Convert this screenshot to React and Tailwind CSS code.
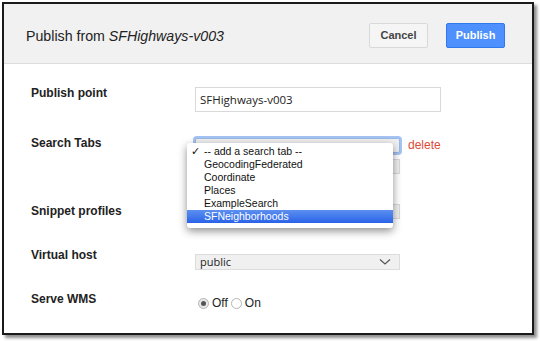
import React from "react";

const ctrl = { fontFamily: '"Open Sans", "DejaVu Sans", sans-serif' };
const menu = { fontFamily: '"Liberation Sans", Arial, sans-serif' };

function Arrow() {
  return (
    <svg width="12" height="8" viewBox="0 0 12 8" className="text-[#555]">
      <path d="M1 1.5 L6 6 L11 1.5" fill="none" stroke="currentColor" strokeWidth="1.2" />
    </svg>
  );
}

export default function App() {
  const items = ["GeocodingFederated", "Coordinate", "Places", "ExampleSearch"];
  return (
    <div className="w-[540px] h-[341px] bg-white pl-[2px] pt-[2px]" style={{ fontFamily: '"Liberation Sans", Arial, sans-serif' }}>
      <div className="relative w-[532px] h-[333px] border-2 border-[#1a1a1a] bg-white shadow-[3px_3px_3px_rgba(0,0,0,0.45)] flex flex-col">
        <div className="h-[60px] bg-[#f1f1f1] border-b border-[#dcdcdc] flex items-center pl-[22px] pr-[27px]">
          <div className="text-[14.2px] text-[#222] flex-1 pt-[6px]">
            Publish from <span className="italic">SFHighways-v003</span>
          </div>
          <button className="w-[59px] h-[25px] mt-[4px] rounded-[2px] border border-[#d9d9d9] bg-[#f5f5f5] text-[11px] font-bold text-[#444] mr-[18px]">
            Cancel
          </button>
          <button className="w-[59px] h-[25px] mt-[4px] rounded-[2px] border border-[#3079ed] bg-[#4d90fe] text-[11px] font-bold text-white">
            Publish
          </button>
        </div>

        <div className="flex flex-col pl-[27px]">
          <div className="flex mt-[23px] h-[25px]">
            <div className="w-[164px] text-[12px] font-bold text-[#222] -mt-[3px]">Publish point</div>
            <div className="w-[246px] h-[25px] border border-[#d9d9d9] flex items-center pl-[4px] text-[11.5px] text-[#222]" style={ctrl}>
              SFHighways-v003
            </div>
          </div>

          <div className="flex mt-[24px]">
            <div className="w-[164px] text-[12px] font-bold text-[#222] -mt-[2px]">Search Tabs</div>
            <div className="flex flex-col">
              <div className="flex items-center">
                <div className="w-[205px] h-[15px] border border-[#9bb8e6] ring-2 ring-[#a5c3f2] rounded-[2px] bg-[#f0f0f0]"></div>
                <span className="ml-[8px] text-[12px] text-[#dd4b39]">delete</span>
              </div>
              <div className="w-[205px] h-[15px] border border-[#d9d9d9] bg-[#f0f0f0] mt-[5px]"></div>
            </div>
          </div>

          <div className="flex mt-[30px]">
            <div className="w-[164px] text-[12px] font-bold text-[#222] -mt-[2px]">Snippet profiles</div>
            <div className="w-[205px] h-[15px] border border-[#d9d9d9] bg-[#f0f0f0]"></div>
          </div>

          <div className="flex mt-[34px] items-start">
            <div className="w-[164px] text-[12px] font-bold text-[#222] -mt-[8px]">Virtual host</div>
            <div className="w-[205px] h-[16px] border border-[#dcdcdc] bg-[#f0f0f0] flex items-center justify-between pl-[4px] pr-[8px] text-[11px] text-[#222]" style={ctrl}>
              <span>public</span>
              <Arrow />
            </div>
          </div>

          <div className="flex mt-[24px] items-start">
            <div className="w-[164px] text-[12px] font-bold text-[#222] -mt-[4px]">Serve WMS</div>
            <div className="flex items-center text-[12px] text-[#222] ml-[3px]">
              <span className="w-[11px] h-[11px] rounded-full border border-[#b5b5b5] bg-[#e8e8e8] flex items-center justify-center">
                <span className="w-[5px] h-[5px] rounded-full bg-[#555]"></span>
              </span>
              <span className="ml-[3px]">Off</span>
              <span className="ml-[3px] w-[11px] h-[11px] rounded-full border border-[#b5b5b5] bg-white"></span>
              <span className="ml-[3px]">On</span>
            </div>
          </div>
        </div>

        <div
          className="absolute left-[183px] top-[139px] w-[206px] bg-white rounded-[3px] shadow-[0_3px_8px_rgba(0,0,0,0.45)] pt-[2px] pb-[5px] text-[10.5px] text-[#111]"
          style={menu}
        >
          <div className="h-[13px] flex items-center leading-[13px]">
            <span className="w-[17px] pl-[4px] text-[11px]">✓</span>
            <span>-- add a search tab --</span>
          </div>
          {items.map((t) => (
            <div key={t} className="h-[13px] flex items-center leading-[13px] pl-[17px]">{t}</div>
          ))}
          <div className="h-[13px] flex items-center leading-[13px] pl-[17px] text-white bg-gradient-to-b from-[#5c8ff0] to-[#2a62e8]">
            SFNeighborhoods
          </div>
        </div>
      </div>
    </div>
  );
}
